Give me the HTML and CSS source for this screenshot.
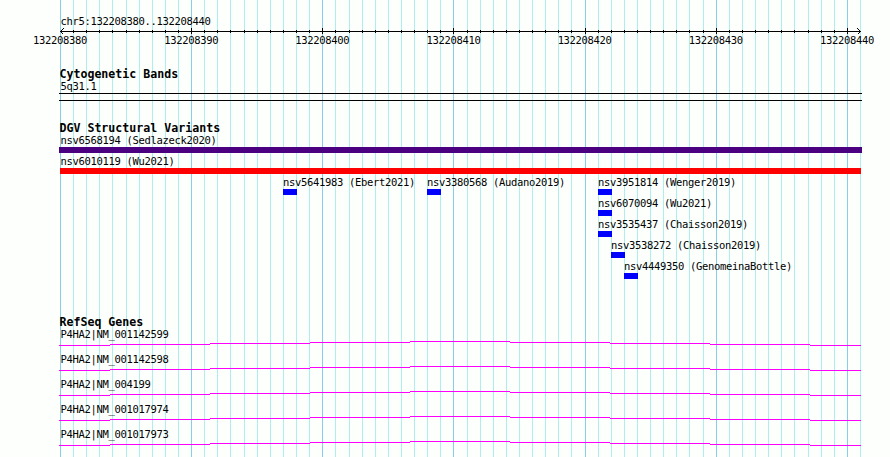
FILE: index.html
```html
<!DOCTYPE html>
<html lang="en">
<head>
<meta charset="utf-8">
<title>chr5:132208380..132208440</title>
<link rel="stylesheet" href="styles.css">
</head>
<body>
<svg class="grid" width="890" height="457" aria-hidden="true">
<path class="grid-minor" d="M73.5 0v457M86.5 0v457M99.5 0v457M112.5 0v457M126.5 0v457M139.5 0v457M152.5 0v457M165.5 0v457M178.5 0v457M204.5 0v457M217.5 0v457M230.5 0v457M244.5 0v457M257.5 0v457M270.5 0v457M283.5 0v457M296.5 0v457M309.5 0v457M335.5 0v457M349.5 0v457M362.5 0v457M375.5 0v457M388.5 0v457M401.5 0v457M414.5 0v457M427.5 0v457M440.5 0v457M467.5 0v457M480.5 0v457M493.5 0v457M506.5 0v457M519.5 0v457M532.5 0v457M545.5 0v457M558.5 0v457M571.5 0v457M598.5 0v457M611.5 0v457M624.5 0v457M637.5 0v457M650.5 0v457M663.5 0v457M676.5 0v457M689.5 0v457M703.5 0v457M729.5 0v457M742.5 0v457M755.5 0v457M768.5 0v457M781.5 0v457M794.5 0v457M808.5 0v457M821.5 0v457M834.5 0v457M860.5 0v457"/>
<path class="grid-major" d="M60.5 0v457M191.5 0v457M322.5 0v457M453.5 0v457M585.5 0v457M716.5 0v457M847.5 0v457"/>
</svg>
<main class="tracks">
<section class="ruler">
<p class="label">chr5:132208380..132208440</p>
<svg class="axis" width="803" height="8" aria-hidden="true">
<path d="M1 4.5H802M14.5 3v3M27.5 3v3M40.5 3v3M53.5 3v3M67.5 3v3M80.5 3v3M93.5 3v3M106.5 3v3M119.5 3v3M132.5 1v6M145.5 3v3M158.5 3v3M171.5 3v3M185.5 3v3M198.5 3v3M211.5 3v3M224.5 3v3M237.5 3v3M250.5 3v3M263.5 1v6M276.5 3v3M290.5 3v3M303.5 3v3M316.5 3v3M329.5 3v3M342.5 3v3M355.5 3v3M368.5 3v3M381.5 3v3M394.5 1v6M408.5 3v3M421.5 3v3M434.5 3v3M447.5 3v3M460.5 3v3M473.5 3v3M486.5 3v3M499.5 3v3M512.5 3v3M526.5 1v6M539.5 3v3M552.5 3v3M565.5 3v3M578.5 3v3M591.5 3v3M604.5 3v3M617.5 3v3M630.5 3v3M644.5 3v3M657.5 1v6M670.5 3v3M683.5 3v3M696.5 3v3M709.5 3v3M722.5 3v3M735.5 3v3M749.5 3v3M762.5 3v3M775.5 3v3M788.5 1v6"/>
<path d="M4.5 1.5l-3 3l3 3M798.5 1.5l3 3l-3 3"/>
</svg>
<div class="ticks"><span>132208380</span><span>132208390</span><span>132208400</span><span>132208410</span><span>132208420</span><span>132208430</span><span>132208440</span></div>
</section>
<section class="bands">
<h2>Cytogenetic Bands</h2>
<p class="label">5q31.1</p>
<div class="band"></div>
</section>
<section class="variants">
<h2>DGV Structural Variants</h2>
<div class="variant"><p class="label">nsv6568194 (Sedlazeck2020)</p><div class="bar bar-purple"></div></div>
<div class="variant"><p class="label">nsv6010119 (Wu2021)</p><div class="bar bar-red"></div></div>
<div class="variant lane">
<div class="hit hit-ebert"><p class="label">nsv5641983 (Ebert2021)</p><div class="bar"></div></div>
<div class="hit hit-audano"><p class="label">nsv3380568 (Audano2019)</p><div class="bar"></div></div>
<div class="hit"><p class="label">nsv3951814 (Wenger2019)</p><div class="bar"></div></div>
</div>
<div class="variant at-421"><p class="label">nsv6070094 (Wu2021)</p><div class="bar"></div></div>
<div class="variant at-421"><p class="label">nsv3535437 (Chaisson2019)</p><div class="bar"></div></div>
<div class="variant at-422"><p class="label">nsv3538272 (Chaisson2019)</p><div class="bar"></div></div>
<div class="variant at-423"><p class="label">nsv4449350 (GenomeinaBottle)</p><div class="bar"></div></div>
</section>
<section class="genes">
<h2>RefSeq Genes</h2>
<svg class="defs" width="0" height="0" aria-hidden="true"><defs><path id="intron" d="M0 4.5H51M51 3.5H151M151 2.5H251M251 1.5H351M351 .5H451M451 1.5H551M551 2.5H651M651 3.5H751M751 4.5H802"/></defs></svg>
<div class="gene"><p class="label">P4HA2|NM_001142599</p><svg class="intron" width="802" height="5"><use href="#intron"/></svg></div>
<div class="gene"><p class="label">P4HA2|NM_001142598</p><svg class="intron" width="802" height="5"><use href="#intron"/></svg></div>
<div class="gene"><p class="label">P4HA2|NM_004199</p><svg class="intron" width="802" height="5"><use href="#intron"/></svg></div>
<div class="gene"><p class="label">P4HA2|NM_001017974</p><svg class="intron" width="802" height="5"><use href="#intron"/></svg></div>
<div class="gene"><p class="label">P4HA2|NM_001017973</p><svg class="intron" width="802" height="5"><use href="#intron"/></svg></div>
</section>
</main>
</body>
</html>
```
FILE: styles.css
```css
* { box-sizing: border-box; }

body {
  margin: 0;
  width: 890px;
  height: 457px;
  overflow: hidden;
  position: relative;
  background: #fdfffc;
  color: #000;
  font: 10.5px/12px "DejaVu Sans Mono", monospace;
  letter-spacing: -0.322px;
}

p, h2 { margin: 0; white-space: nowrap; }
svg { display: block; }

.grid { position: absolute; inset: 0; shape-rendering: crispEdges; }
.grid-minor { stroke: #afeeee; }
.grid-major { stroke: #87ceeb; }

.tracks {
  position: relative;
  width: 803px;
  margin-left: 59px;
  padding-top: 15px;
}

.label { height: 12px; padding-left: 1.4px; line-height: 12px; }

h2 {
  height: 12px;
  padding-left: 0.4px;
  font-size: 11.6px;
  line-height: 12px;
  font-weight: 700;
  letter-spacing: 0.017px;
}

.ruler { height: 53px; }
.axis { stroke: #000; fill: none; shape-rendering: crispEdges; }
.ticks {
  display: flex;
  justify-content: space-between;
  width: 841px;
  margin-left: -26px;
  line-height: 10px;
}

.bands { height: 54px; }
.band {
  width: 803px;
  height: 8px;
  margin-top: 1px;
  border: solid #000;
  border-width: 1px 0;
}

.variants { height: 194px; }
.variant { height: 21px; }
.bar { width: 14px; height: 6px; margin-top: 1px; background: #00f; }
.bar-purple { width: 803px; background: #4b0082; }
.bar-red { width: 801px; margin-left: 1px; background: #f00; }
.lane { display: flex; }
.lane .label, .at-421 .label, .at-422 .label, .at-423 .label { padding-left: 0; }
.hit { width: 171px; }
.hit-ebert { width: 144px; margin-left: 224px; }
.at-421 { padding-left: 539px; }
.at-422 { padding-left: 552px; }
.at-423 { padding-left: 565px; }

.gene { height: 25px; }
.intron { stroke: #f0f; margin-top: 1px; shape-rendering: crispEdges; }
```
